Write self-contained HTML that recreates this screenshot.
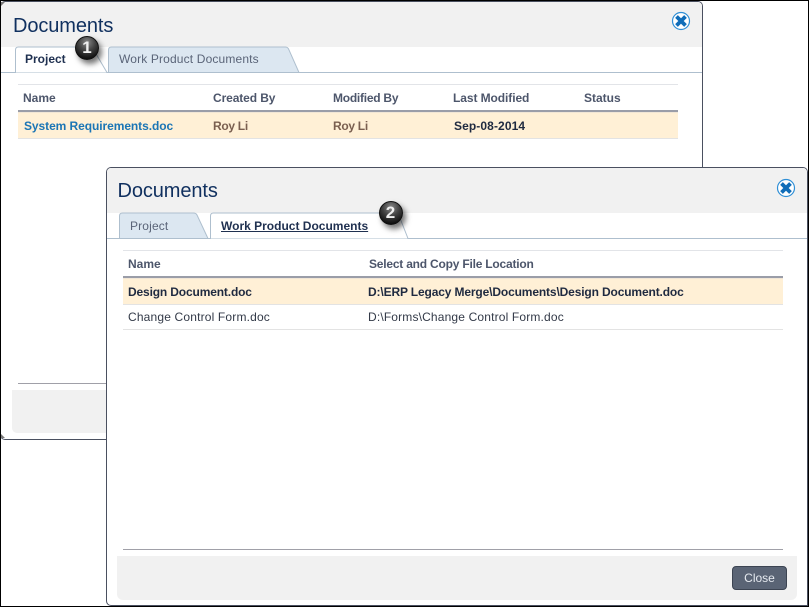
<!DOCTYPE html>
<html>
<head>
<meta charset="utf-8">
<style>
html,body{margin:0;padding:0;background:#fff;}
#page{position:relative;width:807px;height:605px;border:1px solid #000;overflow:hidden;background:#fff;font-family:"Liberation Sans",sans-serif;}
.abs,.t{position:absolute;}
.t{white-space:nowrap;font-size:12px;line-height:14px;}
.b{font-weight:bold;}
.r{letter-spacing:.15px;}
.dlg{position:absolute;box-sizing:border-box;border:1px solid #4a5060;background:#fff;border-radius:5px 5px 0 5px;overflow:hidden;}
.title{position:absolute;font-size:20px;line-height:24px;color:#10305f;white-space:nowrap;letter-spacing:-.1px;}
.num{position:absolute;width:24px;height:24px;border-radius:50%;background:radial-gradient(circle at 50% 25%,#8a8a8a 0,#444 40%,#0a0a0a 85%);border:1px solid #111;box-sizing:border-box;box-shadow:3px 4px 6px rgba(0,0,0,.55);color:#f0f0f0;font-weight:bold;font-size:17px;line-height:22px;text-align:center;}
</style>
</head>
<body>
<div id="page">

<!-- dialog 1 -->
<div class="dlg" style="left:-1px;top:0;width:703px;height:439px;">
  <div class="abs" style="left:0;top:0;width:701px;height:45px;background:#f1f1f1;"></div>
  <div class="title" style="left:12px;top:12px;">Documents</div>
  <div class="abs" style="left:0;top:70px;width:701px;height:1px;background:#aebfce;"></div>
  <svg class="abs" style="left:1px;top:40px;" width="320" height="32">
    <path d="M-1 30.500H13.500V8Q13.500 5 16.500 5H90L105 30.500H320" fill="#fff" stroke="#aebfce"/>
    <path d="M106.500 30.500V8Q106.500 5 109.500 5H283.500Q286 5 287 8L297 30.500Z" fill="#dce7f1" stroke="#aebfce"/>
  </svg>
  <div class="t b" style="left:24px;top:50px;color:#1f3050;">Project</div>
  <div class="t r" style="left:118px;top:50px;color:#5a6478;">Work Product Documents</div>
  <div class="abs" style="left:17px;top:82px;width:660px;height:1px;background:#e2e4e8;"></div>
  <div class="t b" style="left:22px;top:89px;color:#4d566b;">Name</div>
  <div class="t b" style="left:212px;top:89px;color:#4d566b;letter-spacing:-.1px;">Created By</div>
  <div class="t b" style="left:332px;top:89px;color:#4d566b;letter-spacing:-.25px;">Modified By</div>
  <div class="t b" style="left:452px;top:89px;color:#4d566b;letter-spacing:-.08px;">Last Modified</div>
  <div class="t b" style="left:583px;top:89px;color:#4d566b;">Status</div>
  <div class="abs" style="left:17px;top:108px;width:660px;height:2px;background:#9a9da8;"></div>
  <div class="abs" style="left:17px;top:110px;width:660px;height:27px;box-sizing:border-box;background:#fff0d6;border-bottom:1px solid #e3e3e3;border-top:1px solid #f1e6d6;"></div>
  <div class="t b" style="left:23px;top:117px;color:#1b75b5;letter-spacing:-.07px;">System Requirements.doc</div>
  <div class="t b" style="left:212px;top:117px;color:#7a5f50;letter-spacing:-.3px;">Roy Li</div>
  <div class="t b" style="left:332px;top:117px;color:#7a5f50;letter-spacing:-.3px;">Roy Li</div>
  <div class="t b" style="left:453px;top:117px;color:#1f2a40;letter-spacing:.1px;">Sep-08-2014</div>
  <div class="abs" style="left:17px;top:381px;width:684px;height:1px;background:#a0a0a8;"></div>
  <div class="abs" style="left:11px;top:388px;width:690px;height:43px;background:#f1f1f1;border-radius:0 0 0 5px;"></div>
</div>
<svg class="abs" style="left:0;top:1px;" width="4" height="4"><path d="M0 0H4L0 4Z" fill="#777"/></svg>
<svg class="abs" style="left:0;top:433px;" width="4" height="4"><path d="M0 0V4H4Z" fill="#777"/></svg>
<svg class="abs" style="left:670px;top:10px;" width="20" height="20" viewBox="0 0 20 20">
  <circle cx="10" cy="10" r="8.500" fill="#fff" stroke="#2f8fd6" stroke-width="1.200"/>
  <path d="M5.500 5.500L14.500 14.500M14.500 5.500L5.500 14.500" stroke="#0f6cb8" stroke-width="3.800"/>
</svg>
<div class="num" style="left:74px;top:35px;">1</div>

<!-- dialog 2 -->
<div class="dlg" style="left:105px;top:166px;width:702px;height:439px;">
  <div class="abs" style="left:0;top:0;width:700px;height:45px;background:#f1f1f1;"></div>
  <div class="title" style="left:10.500px;top:11px;">Documents</div>
  <div class="abs" style="left:0;top:70px;width:700px;height:1px;background:#aebfce;"></div>
  <svg class="abs" style="left:-1px;top:40px;" width="330" height="32">
    <path d="M13.500 30.500V8Q13.500 5 16.500 5H87.500Q90 5 91 7L102 30.500Z" fill="#dce7f1" stroke="#aebfce"/>
    <path d="M102 30.500H104.500V8Q104.500 5 107.500 5H292L302 30.500H330" fill="#fff" stroke="#aebfce"/>
  </svg>
  <div class="t r" style="left:23px;top:51px;color:#5a6478;">Project</div>
  <div class="t b" style="left:114px;top:51px;color:#1f3050;text-decoration:underline;">Work Product Documents</div>
  <div class="abs" style="left:16px;top:82px;width:660px;height:1px;background:#e2e4e8;"></div>
  <div class="t b" style="left:21px;top:89px;color:#4d566b;">Name</div>
  <div class="t b" style="left:262px;top:89px;color:#4d566b;letter-spacing:-.21px;">Select and Copy File Location</div>
  <div class="abs" style="left:16px;top:108px;width:660px;height:2px;background:#9a9da8;"></div>
  <div class="abs" style="left:16px;top:110px;width:660px;height:27px;box-sizing:border-box;background:#fff0d6;border-bottom:1px solid #e3e3e3;border-top:1px solid #f1e6d6;"></div>
  <div class="t b" style="left:21px;top:117px;color:#1f2a40;letter-spacing:-.15px;">Design Document.doc</div>
  <div class="t b" style="left:261px;top:117px;color:#1f2a40;letter-spacing:-.14px;">D:\ERP Legacy Merge\Documents\Design Document.doc</div>
  <div class="t r" style="left:21px;top:142px;color:#333a48;letter-spacing:.17px;">Change Control Form.doc</div>
  <div class="t r" style="left:261px;top:142px;color:#333a48;letter-spacing:.16px;">D:\Forms\Change Control Form.doc</div>
  <div class="abs" style="left:16px;top:161px;width:660px;height:1px;background:#e3e3e3;"></div>
  <div class="abs" style="left:16px;top:381px;width:660px;height:1px;background:#a0a0a8;"></div>
  <div class="abs" style="left:10px;top:388px;width:680px;height:44px;background:#f1f1f1;border-radius:0 0 6px 6px;"></div>
  <div class="abs" style="left:625px;top:398px;width:55px;height:24px;box-sizing:border-box;background:#5a6475;border:1px solid #3c4452;border-radius:4px;color:#e6eaf0;font-size:12px;line-height:22px;text-align:center;">Close</div>
</div>
<svg class="abs" style="left:775px;top:176.500px;" width="20" height="20" viewBox="0 0 20 20">
  <circle cx="10" cy="10" r="8.500" fill="#fff" stroke="#2f8fd6" stroke-width="1.200"/>
  <path d="M5.500 5.500L14.500 14.500M14.500 5.500L5.500 14.500" stroke="#0f6cb8" stroke-width="3.800"/>
</svg>
<div class="num" style="left:377.500px;top:200px;">2</div>

</div>
</body>
</html>
